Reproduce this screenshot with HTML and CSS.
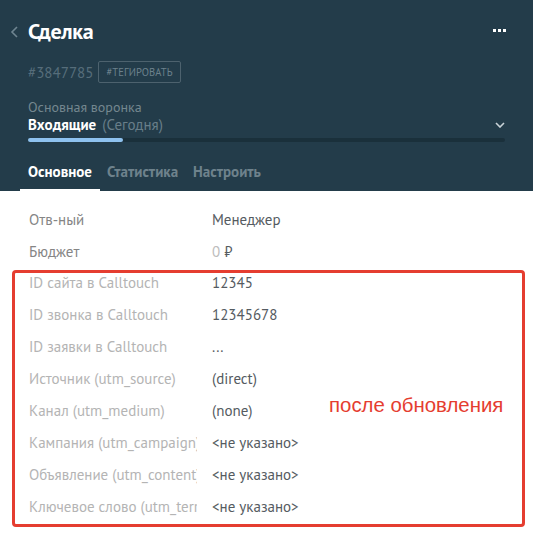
FILE: index.html
```html
<!DOCTYPE html>
<html lang="ru">
<head>
    <meta charset="UTF-8">
    <meta name="viewport" content="width=device-width, initial-scale=1.0">
    <title>Сделка</title>
    <link rel="stylesheet" href="styles.css">
</head>
<body>
    <header class="card-head">
        <div class="title-row">
            <svg class="back" width="9" height="12" viewBox="0 0 9 12"><path d="M7 1 L2 6 L7 11" fill="none" stroke="#6f8591" stroke-width="1.6"/></svg>
            <h1 class="title">Сделка</h1>
            <span class="more"><i></i><i></i><i></i></span>
        </div>
        <div class="id-row">
            <span class="deal-id">#3847785</span>
            <span class="tag-btn">#тегировать</span>
        </div>
        <div class="pipeline">
            <div class="pipeline-name">Основная воронка</div>
            <div class="status-row">
                <span class="status">Входящие</span>
                <span class="status-date">(Сегодня)</span>
                <svg class="caret" width="10" height="6" viewBox="0 0 10 6"><path d="M1 1 L5 5 L9 1" fill="none" stroke="#c9d3d8" stroke-width="1.6"/></svg>
            </div>
            <div class="progress"><div class="progress-fill" style="width: 20%"></div></div>
        </div>
        <nav class="tabs">
            <span class="tab active">Основное</span>
            <span class="tab">Статистика</span>
            <span class="tab">Настроить</span>
        </nav>
    </header>

    <main class="fields">
        <div class="row"><span class="label main">Отв-ный</span><span class="value">Менеджер</span></div>
        <div class="row"><span class="label main">Бюджет</span><span class="value"><span class="zero">0</span> ₽</span></div>

        <section class="marked">
            <div class="row"><span class="label">ID сайта в Calltouch</span><span class="value">12345</span></div>
            <div class="row"><span class="label">ID звонка в Calltouch</span><span class="value">12345678</span></div>
            <div class="row"><span class="label">ID заявки в Calltouch</span><span class="value">...</span></div>
            <div class="row"><span class="label">Источник (utm_source)</span><span class="value">(direct)</span></div>
            <div class="row"><span class="label">Канал (utm_medium)</span><span class="value">(none)</span></div>
            <div class="row"><span class="label">Кампания (utm_campaign)</span><span class="value">&lt;не указано&gt;</span></div>
            <div class="row"><span class="label">Объявление (utm_content)</span><span class="value">&lt;не указано&gt;</span></div>
            <div class="row"><span class="label">Ключевое слово (utm_term)</span><span class="value">&lt;не указано&gt;</span></div>
            <p class="note">после обновления</p>
        </section>
    </main>
</body>
</html>
```

FILE: styles.css
```css
body {
    margin: 0;
    background-color: #fff;
    font-family: "PT Sans", Roboto, "Noto Sans", sans-serif;
}

.card-head {
    background-color: #233c4a;
    padding: 17px 28px 0 28px;
    height: 174px;
}

.title-row {
    display: flex;
    align-items: center;
    height: 28px;
    position: relative;
}

.back {
    position: absolute;
    left: -18px;
    top: 9px;
}

.title {
    margin: 0;
    font-size: 22px;
    font-weight: bold;
    color: #fff;
    letter-spacing: -0.3px;
}

.more {
    margin-left: auto;
    margin-right: -1px;
    margin-top: -2px;
    display: flex;
    gap: 2px;
}

.more i {
    width: 3px;
    height: 3px;
    background-color: #fff;
}

.id-row {
    display: flex;
    align-items: center;
    gap: 5px;
    margin-top: 16px;
}

.deal-id {
    font-size: 15px;
    color: #566d7a;
}

.tag-btn {
    border: 1px solid #4d626e;
    border-radius: 2px;
    padding: 4px 7px 3px;
    font-size: 10.5px;
    line-height: 13px;
    text-transform: uppercase;
    color: #6c818c;
    letter-spacing: 0.1px;
}

.pipeline {
    margin-top: 16px;
}

.pipeline-name {
    font-size: 14px;
    color: #74878f;
    line-height: 17px;
}

.status-row {
    display: flex;
    align-items: center;
    line-height: 18px;
    margin-top: 0;
}

.status {
    font-size: 15px;
    font-weight: bold;
    color: #fff;
}

.status-date {
    font-size: 15px;
    color: #687e89;
    margin-left: 6px;
}

.caret {
    margin-left: auto;
}

.progress {
    margin-top: 4px;
    height: 4px;
    background-color: #1a303b;
    border-radius: 2px;
}

.progress-fill {
    height: 4px;
    background-color: #8ec2ef;
    border-radius: 2px;
}

.tabs {
    display: flex;
    gap: 15px;
    margin-top: 21px;
}

.tab {
    font-size: 15px;
    line-height: 18px;
    font-weight: bold;
    color: #6e828c;
    position: relative;
}

.tab.active {
    color: #fff;
}

.tab.active::after {
    content: "";
    position: absolute;
    left: -8px;
    right: -8px;
    top: 26px;
    height: 3px;
    background-color: #fff;
}

.fields {
    padding-top: 19px;
}

.row {
    display: flex;
    height: 32px;
    line-height: 20px;
    font-size: 15px;
    padding-left: 29px;
}

.label {
    width: 168px;
    flex: none;
    overflow: hidden;
    white-space: nowrap;
    color: #b4b4b4;
}

.label.main {
    color: #858585;
}

.value {
    margin-left: 15px;
    color: #555b61;
}

.zero {
    color: #bdbdbd;
}

.marked {
    position: relative;
    margin: -4px 8px 0 12px;
    border: 3px solid #e53d30;
    border-radius: 4px;
}

.marked .row {
    padding-left: 14px;
}

.marked .row:last-of-type {
    height: 27px;
}

.note {
    position: absolute;
    left: 314px;
    top: 121px;
    margin: 0;
    font-family: "Liberation Sans", Arial, sans-serif;
    font-size: 20.4px;
    color: #e53d30;
}
```
